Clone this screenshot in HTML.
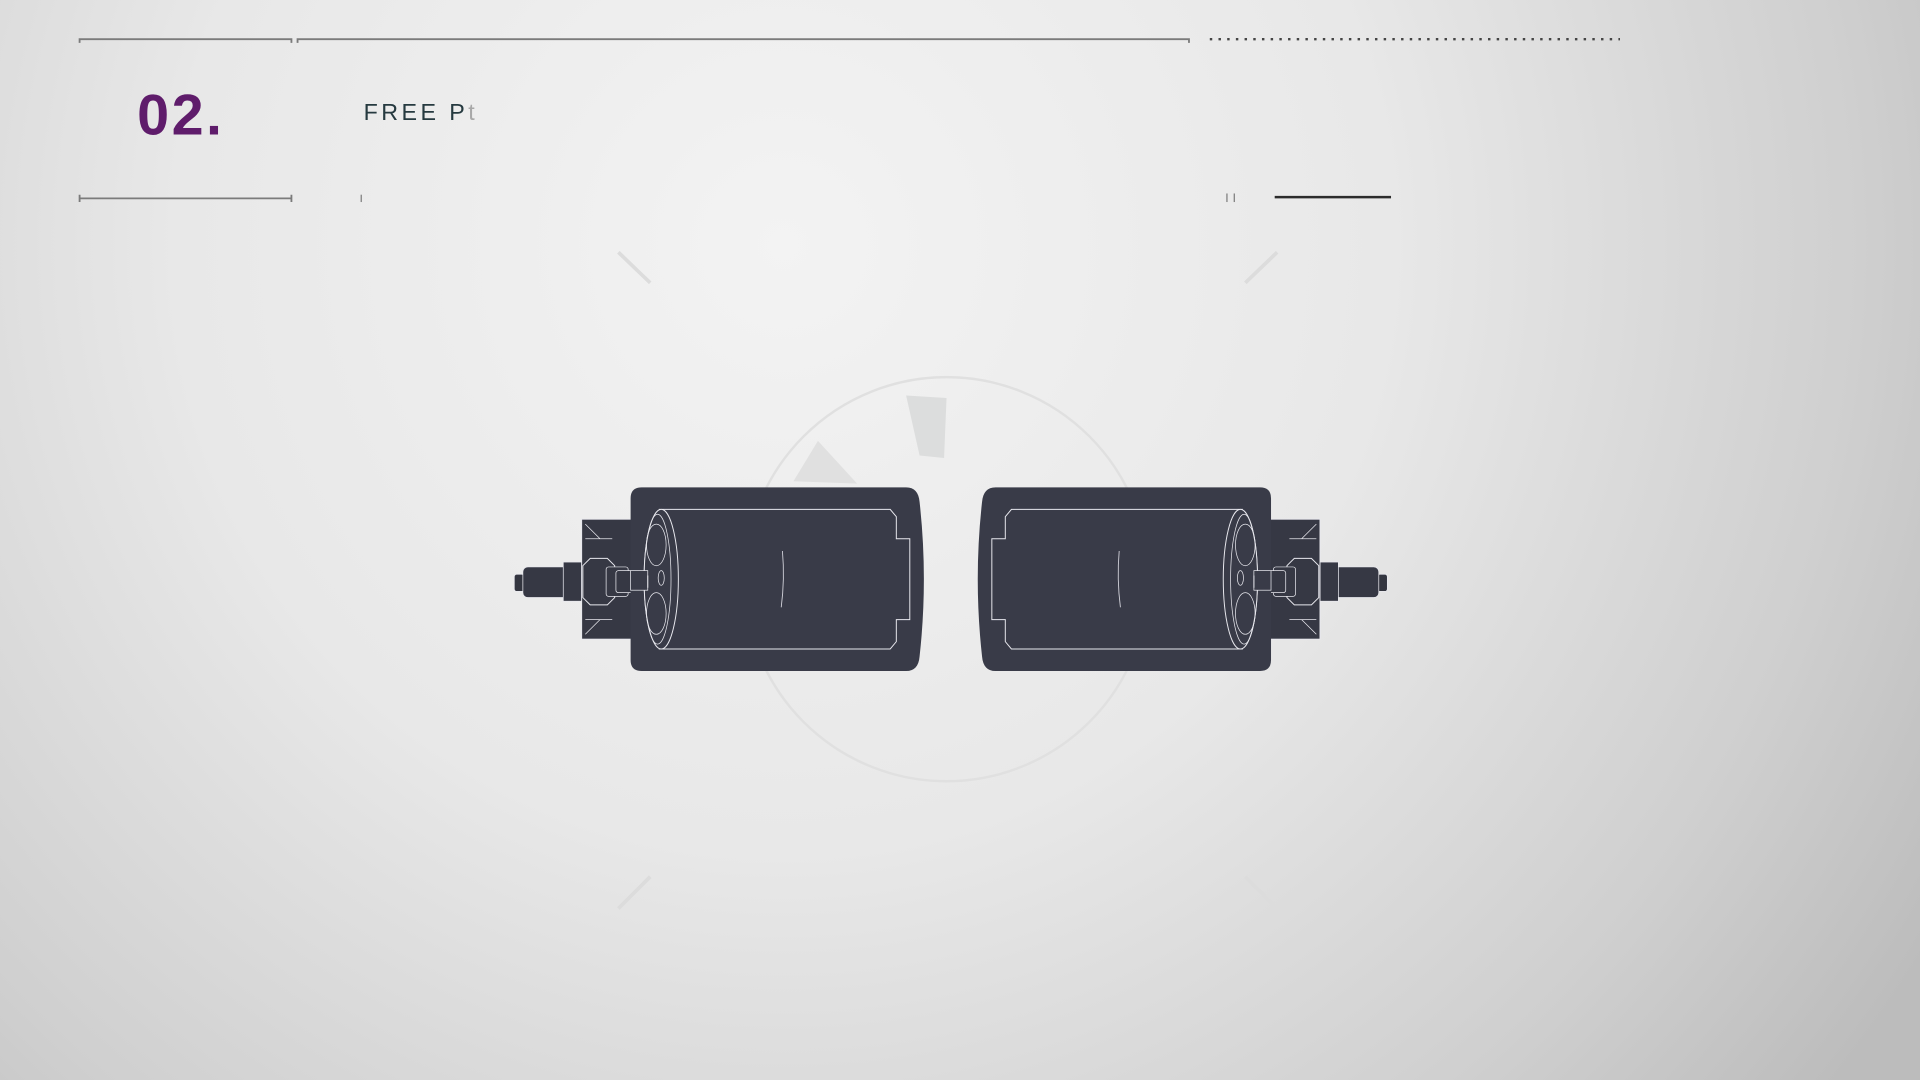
<!DOCTYPE html>
<html><head><meta charset="utf-8"><style>
html,body{margin:0;padding:0;width:1920px;height:1080px;overflow:hidden;background:#e6e6e6}
svg{display:block}
</style></head><body>
<svg width="1920" height="1080" viewBox="0 0 1568 882" xmlns="http://www.w3.org/2000/svg">
<defs>
<radialGradient id="bg" cx="640" cy="200" r="1100" gradientUnits="userSpaceOnUse">
<stop offset="0" stop-color="#f3f3f3"/>
<stop offset="0.45" stop-color="#e8e8e8"/>
<stop offset="0.8" stop-color="#cfcfcf"/>
<stop offset="1" stop-color="#bcbcbc"/>
</radialGradient>
<g id="motor">
<rect x="420" y="469" width="8" height="14" rx="2" fill="#33353f" stroke="#e8e8ee" stroke-width="0.6"/>
<rect x="427" y="463" width="38" height="25" rx="4" fill="#363844" stroke="#e8e8ee" stroke-width="0.6"/>
<rect x="460" y="459" width="18" height="32" fill="#363844" stroke="#e8e8ee" stroke-width="0.6"/>
<rect x="475" y="424" width="42" height="98" fill="#363844" stroke="#e8e8ee" stroke-width="0.8"/>
<path d="M478 428 L490 440 M478 518 L490 506 M478 440 L500 440 M478 506 L500 506" stroke="#e8e8ee" stroke-width="0.6" fill="none"/>
<polygon points="476,462 482,456 496,456 502,462 502,488 496,494 482,494 476,488" fill="#363844" stroke="#e8e8ee" stroke-width="0.8"/>
<rect x="495" y="463" width="18" height="24" rx="2" fill="#363844" stroke="#e8e8ee" stroke-width="0.6"/>
<rect x="503" y="466" width="16" height="18" rx="2" fill="#363844" stroke="#e8e8ee" stroke-width="0.6"/>
<path d="M524 398 H740 Q750 398 751 410 Q758 473 751 536 Q750 548 740 548 H524 Q515 548 515 539 V407 Q515 398 524 398 Z" fill="#393b48"/>
<path d="M538 416 H727 L732 422 V440 H743 V506 H732 V524 L727 530 H538" fill="none" stroke="#e8e8ee" stroke-width="0.8"/>
<ellipse cx="540" cy="473" rx="14" ry="57" fill="#393b48" stroke="#e8e8ee" stroke-width="0.8"/>
<ellipse cx="537" cy="473" rx="11" ry="53" fill="none" stroke="#e8e8ee" stroke-width="0.6"/>
<ellipse cx="536" cy="445" rx="8" ry="17" fill="none" stroke="#e8e8ee" stroke-width="0.6"/>
<ellipse cx="536" cy="501" rx="8" ry="17" fill="none" stroke="#e8e8ee" stroke-width="0.6"/>
<ellipse cx="540" cy="472" rx="2.5" ry="6" fill="none" stroke="#e8e8ee" stroke-width="0.6"/>
<rect x="515" y="466" width="14" height="16" fill="#393b48" stroke="#e8e8ee" stroke-width="0.6"/>
<line x1="529" y1="470" x2="529" y2="480" stroke="#e8e8ee" stroke-width="0.8"/>
<path d="M639 450 Q641 473 638 496" stroke="#d8d8e0" stroke-width="0.7" fill="none"/>
</g>
</defs>
<rect width="1568" height="882" fill="url(#bg)"/>
<circle cx="773" cy="473" r="165" fill="none" stroke="#e0e0e0" stroke-width="2"/>
<path d="M740 323 L773 325 L771 374 L751 372 Z" fill="#dcdddd"/>
<path d="M648 393 L668 360 L700 395 Z" fill="#e0e0e0"/>
<g stroke="#dcdcdc" stroke-width="3">
<line x1="505" y1="206" x2="531" y2="231"/>
<line x1="1043" y1="206" x2="1017" y2="231"/>
<line x1="505" y1="742" x2="531" y2="716"/>
<line x1="1043" y1="742" x2="1017" y2="716"/>
</g>
<g stroke="#7b7b7b" stroke-width="1.5" fill="none">
<path d="M65 35 V32 H238 V35"/>
<path d="M243 35 V32 H971 V35"/>
<path d="M65 159 V165 M65 162 H238 M238 159 V165"/>
<line x1="295" y1="159" x2="295" y2="165" stroke-width="1"/>
<line x1="1002" y1="158" x2="1002" y2="165" stroke-width="1"/>
<line x1="1008" y1="158" x2="1008" y2="165" stroke-width="1"/>
</g>
<line x1="988" y1="32" x2="1323" y2="32" stroke="#444" stroke-width="2" stroke-dasharray="2 5.1"/>
<line x1="1041" y1="161" x2="1136" y2="161" stroke="#2c2c2c" stroke-width="2"/>
<text x="112" y="110" font-family="Liberation Sans, sans-serif" font-size="47" font-weight="bold" fill="#5f1c6b" letter-spacing="2">02.</text>
<text x="297" y="98" font-family="Liberation Sans, sans-serif" font-size="19" fill="#263a40" letter-spacing="2.8">FREE P<tspan fill="#a8a8a8">t</tspan></text>
<use href="#motor"/>
<use href="#motor" transform="translate(1553 0) scale(-1 1)"/>
</svg>
</body></html>
